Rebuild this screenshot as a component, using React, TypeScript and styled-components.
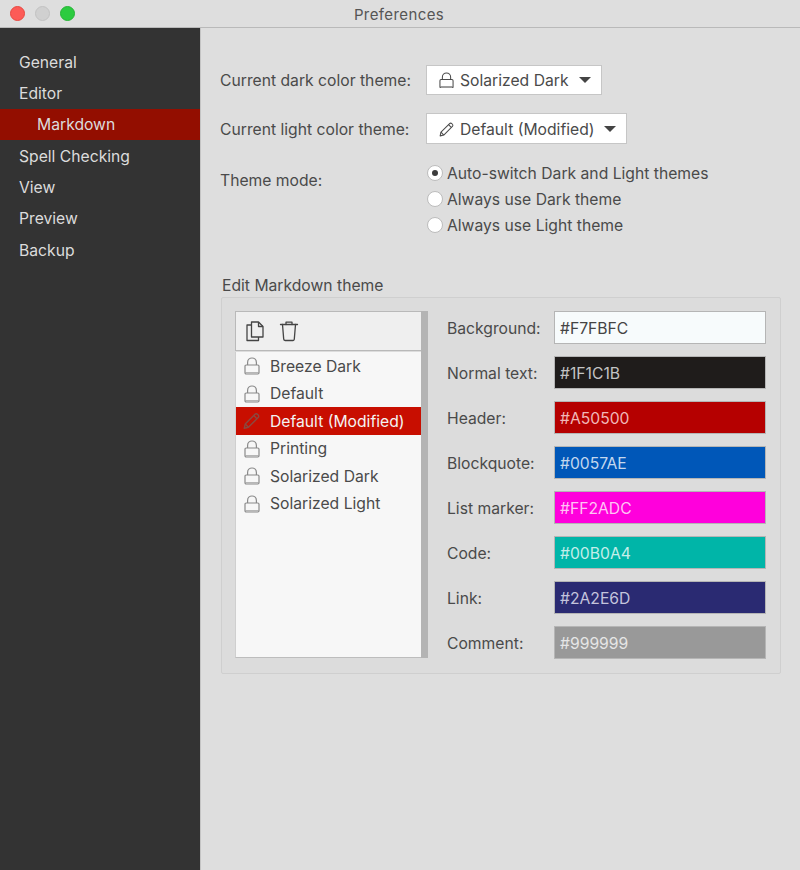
import React from "react";
import styled, { createGlobalStyle } from "styled-components";

const GlobalStyle = createGlobalStyle`
  html, body {
    margin: 0;
    padding: 0;
    background: #dedede;
  }
  body {
    font-family: "Inter", "Liberation Sans", sans-serif;
    font-size: 15.7px;
    color: #4a4a4a;
  }
`;

const Window = styled.div`
  width: 800px;
  height: 870px;
  display: flex;
  flex-direction: column;
  overflow: hidden;
`;

const TitleBar = styled.div`
  height: 27px;
  flex: none;
  border-bottom: 1px solid #b9b9b9;
  background: #dedede;
  display: grid;
  grid-template-columns: 1fr auto 1fr;
  align-items: center;
  padding: 0 10px;
`;

const Lights = styled.div`
  display: flex;
  gap: 10px;
`;

const Light = styled.span<{ $color: string; $edge: string }>`
  width: 15px;
  height: 15px;
  border-radius: 50%;
  background: ${(p) => p.$color};
  border: 1px solid ${(p) => p.$edge};
  box-sizing: border-box;
`;

const Title = styled.div`
  font-size: 15px;
  letter-spacing: 0.4px;
  color: #555;
  padding: 1px 2px 0 0;
`;

const Body = styled.div`
  flex: 1;
  display: flex;
  min-height: 0;
`;

const Sidebar = styled.nav`
  width: 200px;
  flex: none;
  background: #333333;
  border-right: 1px solid #c4c4c4;
  padding-top: 18.6px;
`;

const NavItem = styled.div<{ $active?: boolean; $sub?: boolean }>`
  height: 31.3px;
  display: flex;
  align-items: center;
  padding-left: ${(p) => (p.$sub ? "37px" : "19px")};
  background: ${(p) => (p.$active ? "#930e00" : "transparent")};
  color: #dcdcdc;
`;

const Main = styled.main`
  flex: 1;
  padding: 37px 19px 0 19px;
`;

const SelectRow = styled.div`
  display: flex;
  align-items: center;
  height: 30px;
  margin-bottom: 18px;
`;

const LightSelectRow = styled(SelectRow)`
  height: 31px;
`;

const RowLabel = styled.div`
  width: 206px;
  flex: none;
`;

const LightRowLabel = styled(RowLabel)`
  padding-top: 1px;
`;

const Select = styled.div`
  height: 100%;
  box-sizing: border-box;
  display: flex;
  align-items: center;
  gap: 6px;
  padding: 0 10px 0 12px;
  background: #fff;
  border: 1px solid #c6c6c6;
`;

const LightSelect = styled(Select)`
  padding-top: 1px;
`;

const Caret = styled.span`
  width: 0;
  height: 0;
  margin-left: 4px;
  border-left: 6px solid transparent;
  border-right: 6px solid transparent;
  border-top: 6px solid #444;
`;

const ModeRow = styled.div`
  display: flex;
  margin-top: -2px;
`;

const ModeLabel = styled(RowLabel)`
  padding-top: 11px;
`;

const Radios = styled.div`
  display: flex;
  flex-direction: column;
`;

const RadioRow = styled.div`
  height: 26px;
  display: flex;
  align-items: center;
  gap: 4px;
`;

const RadioDot = styled.span<{ $checked?: boolean }>`
  width: 16px;
  height: 16px;
  box-sizing: border-box;
  margin-left: 1px;
  border-radius: 50%;
  background: #fff;
  border: 1px solid #bcbcbc;
  display: flex;
  align-items: center;
  justify-content: center;

  &::after {
    content: "";
    display: ${(p) => (p.$checked ? "block" : "none")};
    width: 6px;
    height: 6px;
    border-radius: 50%;
    background: #3c3c3c;
  }
`;

const GroupTitle = styled.div`
  margin: 38px 0 1px 2px;
  height: 20px;
  line-height: 20px;
`;

const Group = styled.section`
  margin-left: 1px;
  width: 560px;
  height: 377px;
  box-sizing: border-box;
  background: #dcdcdc;
  border: 1px solid #cfcfcf;
  border-radius: 2px;
  padding: 13px 13px;
  display: flex;
`;

const ListPane = styled.div`
  width: 193px;
  height: 347px;
  flex: none;
  display: flex;
  flex-direction: column;
  border-right: 7px solid #b4b4b4;
  box-sizing: border-box;
`;

const Toolbar = styled.div`
  height: 40px;
  flex: none;
  box-sizing: border-box;
  background: #efefef;
  border: 1px solid #b9b9b9;
  border-right: none;
  display: flex;
  align-items: center;
  gap: 14px;
  padding-left: 9px;
  margin-bottom: 1px;
  color: #444;
`;

const List = styled.ul`
  flex: 1;
  margin: 0;
  padding: 0;
  list-style: none;
  background: #f7f7f7;
  border-left: 1px solid #cfcfcf;
  border-bottom: 1px solid #bdbdbd;
`;

const ListRow = styled.li<{ $active?: boolean }>`
  height: 27.5px;
  box-sizing: border-box;
  padding: 1px 0 0 7px;
  display: flex;
  align-items: center;
  gap: 10px;
  background: ${(p) => (p.$active ? "#c80e00" : "transparent")};
  color: ${(p) => (p.$active ? "#f4f4f4" : "#4a4a4a")};
`;

const RowIcon = styled.span<{ $active?: boolean }>`
  display: flex;
  width: 17px;
  justify-content: center;
  color: ${(p) => (p.$active ? "#8a4a40" : "#8a8a8a")};
`;

const Fields = styled.div`
  margin-left: 19px;
  display: flex;
  flex-direction: column;
  gap: 12px;
`;

const FieldRow = styled.div`
  display: flex;
  align-items: center;
  height: 33px;
`;

const FieldLabel = styled.label`
  width: 107px;
  flex: none;
  padding-top: 1px;
`;

const Swatch = styled.div<{ $bg: string; $fg: string }>`
  width: 212px;
  height: 33px;
  box-sizing: border-box;
  display: flex;
  align-items: center;
  padding: 1px 0 0 5px;
  background: ${(p) => p.$bg};
  color: ${(p) => p.$fg};
  border: 1px solid #b5b5b5;
`;

const LockIcon = ({ size = 16, stroke = 1.2 }: { size?: number; stroke?: number }) => (
  <svg width={size} height={size * 1.125} viewBox="0 0 16 18" fill="none" stroke="currentColor" strokeWidth={stroke}>
    <rect x="1" y="8" width="14" height="9" rx="1.2" />
    <path d="M3.6 8V5.4a4.4 4.4 0 0 1 8.8 0V8" />
    <path d="M1.5 15.6h13" opacity="0.6" />
  </svg>
);

const PencilIcon = ({ size = 16, stroke = 1.1 }: { size?: number; stroke?: number }) => (
  <svg width={size} height={size} viewBox="0 0 16 16" fill="none" stroke="currentColor" strokeWidth={stroke} strokeLinejoin="round">
    <path d="M1.2 14.8l.9-3.9L11.3 1.7a1.6 1.6 0 0 1 2.3 0l.7.7a1.6 1.6 0 0 1 0 2.3L5.1 13.9z" />
    <path d="M2.1 10.9l3 3" />
    <path d="M10.2 2.9l2.9 2.9" />
  </svg>
);

const CopyIcon = () => (
  <svg width="20" height="22" viewBox="0 0 20 22" fill="none" stroke="currentColor" strokeWidth="1.3" strokeLinejoin="round">
    <path d="M6.5 2h7l4.5 4.5V17H6.5z" />
    <path d="M13.5 2v4.5H18" />
    <path d="M6.5 5H2v15.5h11.5V17" />
  </svg>
);

const TrashIcon = () => (
  <svg width="20" height="22" viewBox="0 0 20 22" fill="none" stroke="currentColor" strokeWidth="1.3" strokeLinejoin="round" strokeLinecap="round">
    <path d="M1.5 4.5h17" />
    <path d="M7 4.5V2.2h6v2.3" />
    <path d="M3.5 4.5l1.2 14.6a1.4 1.4 0 0 0 1.4 1.4h7.8a1.4 1.4 0 0 0 1.4-1.4l1.2-14.6" />
  </svg>
);

const navItems = [
  { label: "General" },
  { label: "Editor" },
  { label: "Markdown", sub: true, active: true },
  { label: "Spell Checking" },
  { label: "View" },
  { label: "Preview" },
  { label: "Backup" },
];

const themes = [
  { name: "Breeze Dark" },
  { name: "Default" },
  { name: "Default (Modified)", active: true },
  { name: "Printing" },
  { name: "Solarized Dark" },
  { name: "Solarized Light" },
];

const colors = [
  { label: "Background:", value: "#F7FBFC", fg: "#444444" },
  { label: "Normal text:", value: "#1F1C1B", fg: "#c4c4c4" },
  { label: "Header:", value: "#A50500", bg: "#b50000", fg: "#f0b8b8" },
  { label: "Blockquote:", value: "#0057AE", bg: "#0057b8", fg: "#c4d8ee" },
  { label: "List marker:", value: "#FF2ADC", bg: "#ff00dc", fg: "#ffc4f4" },
  { label: "Code:", value: "#00B0A4", bg: "#00b5a8", fg: "#c4eeea" },
  { label: "Link:", value: "#2A2E6D", bg: "#2a2a72", fg: "#c4c4dc" },
  { label: "Comment:", value: "#999999", fg: "#e6e6e6" },
];

export default function App() {
  return (
    <Window>
      <GlobalStyle />
      <TitleBar>
        <Lights>
          <Light $color="#fc5b57" $edge="#e8483f" />
          <Light $color="#d0d0d0" $edge="#c2c2c2" />
          <Light $color="#2ccb40" $edge="#25b535" />
        </Lights>
        <Title>Preferences</Title>
      </TitleBar>
      <Body>
        <Sidebar>
          {navItems.map((item) => (
            <NavItem key={item.label} $active={item.active} $sub={item.sub}>
              {item.label}
            </NavItem>
          ))}
        </Sidebar>
        <Main>
          <SelectRow>
            <RowLabel>Current dark color theme:</RowLabel>
            <Select>
              <LockIcon size={15} stroke={1.1} />
              Solarized Dark
              <Caret />
            </Select>
          </SelectRow>
          <LightSelectRow>
            <LightRowLabel>Current light color theme:</LightRowLabel>
            <LightSelect>
              <PencilIcon size={15} />
              Default (Modified)
              <Caret />
            </LightSelect>
          </LightSelectRow>
          <ModeRow>
            <ModeLabel>Theme mode:</ModeLabel>
            <Radios>
              <RadioRow>
                <RadioDot $checked />
                Auto-switch Dark and Light themes
              </RadioRow>
              <RadioRow>
                <RadioDot />
                Always use Dark theme
              </RadioRow>
              <RadioRow>
                <RadioDot />
                Always use Light theme
              </RadioRow>
            </Radios>
          </ModeRow>
          <GroupTitle>Edit Markdown theme</GroupTitle>
          <Group>
            <ListPane>
              <Toolbar>
                <CopyIcon />
                <TrashIcon />
              </Toolbar>
              <List>
                {themes.map((t) => (
                  <ListRow key={t.name} $active={t.active}>
                    <RowIcon $active={t.active}>
                      {t.active ? <PencilIcon size={18} stroke={1.3} /> : <LockIcon size={16} />}
                    </RowIcon>
                    {t.name}
                  </ListRow>
                ))}
              </List>
            </ListPane>
            <Fields>
              {colors.map((c) => (
                <FieldRow key={c.label}>
                  <FieldLabel>{c.label}</FieldLabel>
                  <Swatch $bg={c.bg ?? c.value} $fg={c.fg}>
                    {c.value}
                  </Swatch>
                </FieldRow>
              ))}
            </Fields>
          </Group>
        </Main>
      </Body>
    </Window>
  );
}
